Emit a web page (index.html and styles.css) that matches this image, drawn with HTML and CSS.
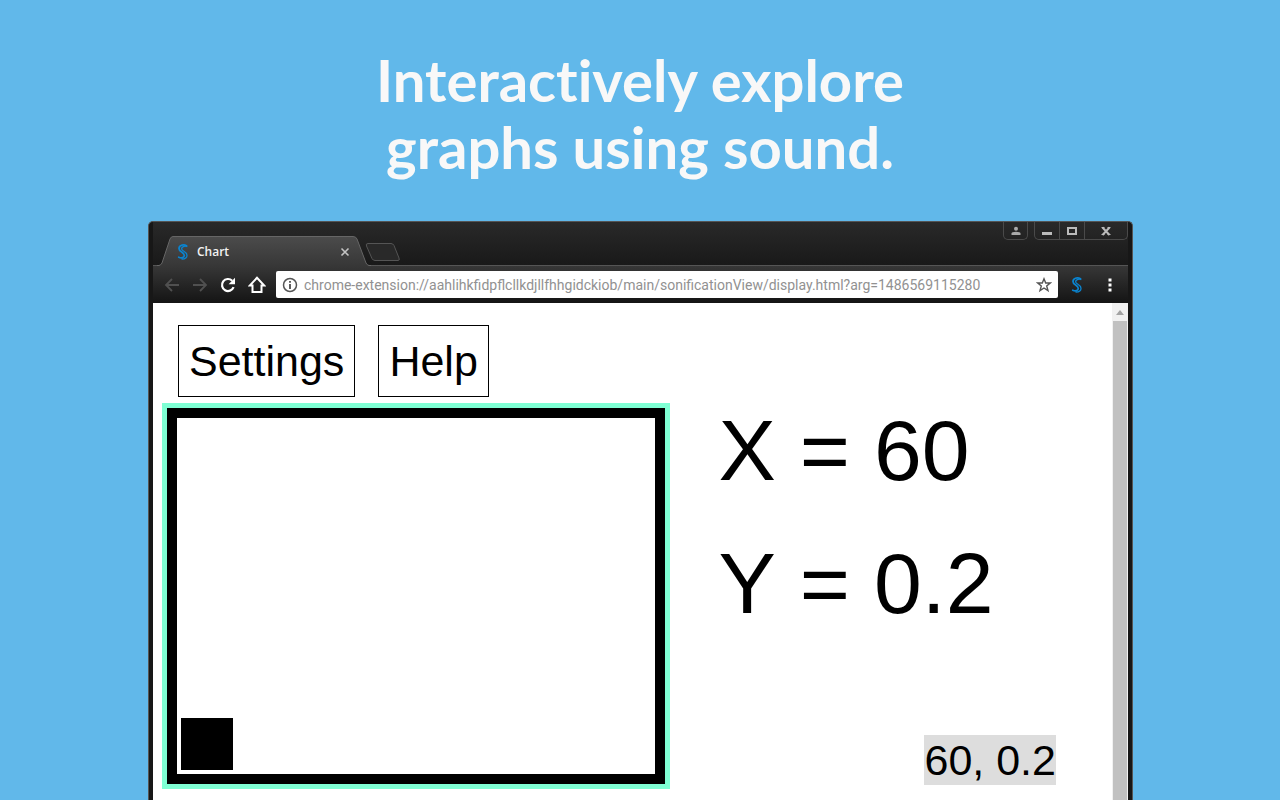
FILE: index.html
```html
<!DOCTYPE html>
<html lang="en">
<head>
<meta charset="utf-8">
<meta name="viewport" content="width=device-width, initial-scale=1">
<title>Chart</title>
<link rel="stylesheet" href="styles.css">
</head>
<body>
<svg width="0" height="0" class="defs" aria-hidden="true">
  <symbol id="logo" viewBox="0 0 12 16">
    <path d="M9.500 1.800C6 -.2 2 1.500 2 4.500C2 8.200 7.300 8 7.300 11.600C7.300 13.600 4.500 14.400 1.800 13.200" fill="none" stroke="#0a84d0" stroke-width="1.800" stroke-linecap="round"/>
    <path d="M9.800 2.500C7.500 1.800 4.600 2.500 4.600 4.800C4.600 7.400 10 7.300 10 11.200C10 13.700 7.800 15 5 15" fill="none" stroke="#0a84d0" stroke-width="1.300" stroke-linecap="round"/>
  </symbol>
</svg>
<h1 class="headline">Interactively explore<br>graphs using sound.</h1>
<div class="stage">
  <div class="window">
    <div class="titlebar">
      <div class="tab">
        <svg class="tab-edge" width="18" height="30" viewBox="0 0 18 30"><path d="M0 30V29.500H2Q4 29 5 27L13 3Q14 .5 16 .5H18V30Z" fill="url(#g)"/><path d="M0 29.500H2Q4 29 5 27L13 3Q14 .5 16 .5H18" fill="none" stroke="#666"/><defs><linearGradient id="g" x1="0" y1="0" x2="0" y2="1"><stop stop-color="#4b4b4b"/><stop offset="1" stop-color="#373737"/></linearGradient></defs></svg>
        <div class="tab-body">
          <svg class="logo" width="12" height="16"><use href="#logo"/></svg>
          <span class="tab-title">Chart</span>
          <button class="plain" aria-label="Close tab"><svg width="10" height="10" viewBox="0 0 10 10"><path d="M1.500 1.500L8.500 8.500M8.500 1.500L1.500 8.500" stroke="#c4c4c4" stroke-width="1.600"/></svg></button>
        </div>
        <svg class="tab-edge" width="18" height="30" viewBox="0 0 18 30"><path d="M18 30V29.500H16Q14 29 13 27L4 3Q3 .5 0 .5V30Z" fill="url(#g)"/><path d="M18 29.500H16Q14 29 13 27L4 3Q3 .5 0 .5" fill="none" stroke="#666"/></svg>
      </div>
      <button class="plain new-tab" aria-label="New tab"><svg width="36" height="19" viewBox="0 0 36 19"><path d="M3 .5H26Q28 .5 29 2.500L34 15Q35 17.500 33 17.500H10Q8 17.500 7 15.500L1.500 3Q.5 .5 3 .5Z" fill="#292929" stroke="#555"/></svg></button>
      <div class="controls">
        <button class="control user" aria-label="Profile"><svg width="10" height="10" viewBox="0 0 10 10"><circle cx="5" cy="2.800" r="2" fill="#aaa"/><path d="M.5 9V7.500Q.5 5.800 5 5.800Q9.500 5.800 9.500 7.500V9Z" fill="#aaa"/></svg></button>
        <div class="control-group">
          <button class="control" aria-label="Minimize"><svg width="12" height="10"><path d="M1 7.500H11" stroke="#bbb" stroke-width="3"/></svg></button>
          <button class="control" aria-label="Maximize"><svg width="12" height="10"><rect x="2" y="2" width="8" height="6" fill="none" stroke="#bbb" stroke-width="2"/></svg></button>
          <button class="control close" aria-label="Close"><svg width="12" height="10"><path d="M2.500 1.500L9.500 9M9.500 1.500L2.500 9" stroke="#bbb" stroke-width="2"/><path d="M1.500 1.500H4.500M7.500 1.500H10.500M1.500 8.500H4.500M7.500 8.500H10.500" stroke="#bbb"/></svg></button>
        </div>
      </div>
    </div>
    <div class="toolbar">
      <div class="nav">
        <button class="plain" aria-label="Back"><svg width="16" height="16" viewBox="0 0 16 16"><path d="M15 8H2M8 2L2 8L8 14" fill="none" stroke="#505050" stroke-width="1.800"/></svg></button>
        <button class="plain" aria-label="Forward"><svg width="16" height="16" viewBox="0 0 16 16"><path d="M1 8H14M8 2L14 8L8 14" fill="none" stroke="#505050" stroke-width="1.800"/></svg></button>
        <button class="plain" aria-label="Reload"><svg width="16" height="16" viewBox="0 0 16 16"><path d="M13.600 10.200A6 6 0 1 1 12.200 3.700" fill="none" stroke="#fff" stroke-width="2.200"/><path d="M15 .8V7.200H8.600Z" fill="#fff"/></svg></button>
        <button class="plain" aria-label="Home"><svg width="18" height="18" viewBox="0 0 18 18"><path d="M9 1.800L1.800 9.500H4.500V16H13.500V9.500H16.200Z" fill="none" stroke="#fff" stroke-width="2"/></svg></button>
      </div>
      <div class="address">
        <svg width="16" height="16" viewBox="0 0 16 16"><circle cx="8" cy="8" r="6.500" fill="none" stroke="#555" stroke-width="1.500"/><path d="M8 4V5.700M8 7V12" stroke="#555" stroke-width="1.900"/></svg>
        <input type="text" class="url" aria-label="Address" value="chrome-extension://aahlihkfidpflcllkdjllfhhgidckiob/main/sonificationView/display.html?arg=1486569115280">
        <button class="plain" aria-label="Bookmark"><svg width="16" height="16" viewBox="0 0 16 16"><path d="M8 1.800L9.700 6H14.200L10.700 8.900L12 13.600L8 11L4 13.600L5.300 8.900L1.800 6H6.300Z" fill="none" stroke="#555" stroke-width="1.400"/></svg></button>
      </div>
      <button class="plain" aria-label="Chart extension"><svg width="12" height="16"><use href="#logo"/></svg></button>
      <button class="plain menu" aria-label="Menu"><svg width="4" height="14"><path d="M.5 .5h3v3h-3zM.5 5.500h3v3h-3zM.5 10.500h3v3h-3z" fill="#fff"/></svg></button>
    </div>
    <div class="viewport">
      <main class="page">
        <div class="actions">
          <button class="action">Settings</button>
          <button class="action">Help</button>
        </div>
        <div class="chart">
          <div class="plot" tabindex="0" role="img" aria-label="Graph"><div class="cursor"></div></div>
          <div class="readout">
            <p class="value">X = 60</p>
            <p class="value">Y = 0.2</p>
            <output class="point">60, 0.2</output>
          </div>
        </div>
      </main>
      <div class="scrollbar"><svg width="8" height="5"><path d="M0 5L4 0L8 5Z" fill="#a3a3a3"/></svg><div class="thumb"></div></div>
    </div>
  </div>
</div>
</body>
</html>
```
FILE: styles.css
```css
* { box-sizing: border-box; }
body {
  margin: 0;
  height: 100vh;
  display: flex;
  flex-direction: column;
  overflow: hidden;
  background: #61b8ea;
  font-family: "Liberation Sans", Arial, sans-serif;
}
svg { display: block; flex: none; }
.defs { position: absolute; }
.headline {
  margin: 0;
  padding: 46px 0 41px;
  color: #f8f8f8;
  font: 700 58px/67px Lato, sans-serif;
  font-variant-ligatures: none;
  text-align: center;
}
.stage {
  flex: 1;
  min-height: 0;
  display: flex;
  padding: 0 147px 0 148px;
}
.window {
  flex: 1;
  min-width: 0;
  display: flex;
  flex-direction: column;
  padding: 0 4px;
  border: 1px solid #555;
  border-bottom: 0;
  border-radius: 5px 5px 0 0;
  background: #171717;
}
.plain {
  display: block;
  flex: none;
  padding: 0;
  border: 0;
  background: none;
}
.titlebar {
  display: flex;
  height: 44px;
  align-items: flex-end;
  padding-left: 4px;
  background: linear-gradient(#292929, #191919);
  border-bottom: 1px solid #555;
}
.tab { display: flex; margin-bottom: -1px; }
.tab-body {
  display: flex;
  align-items: center;
  width: 178px;
  height: 30px;
  padding: 0 3px 0 2px;
  border-top: 1px solid #666;
  background: linear-gradient(#4b4b4b, #373737);
}
.tab-title {
  flex: 1;
  margin-left: 8px;
  color: #f2f2f2;
  font: 600 12px/16px "Open Sans", sans-serif;
}
.new-tab { margin-bottom: 3px; margin-left: -6px; }
.controls {
  display: flex;
  gap: 6px;
  align-self: flex-start;
  margin-left: auto;
}
.control-group {
  display: flex;
  border: 1px solid #4a4a4a;
  border-top: 0;
  border-radius: 0 0 5px 5px;
}
.control {
  display: flex;
  align-items: center;
  justify-content: center;
  width: 25px;
  height: 17px;
  padding: 0;
  border: 0;
  border-right: 1px solid #4a4a4a;
  background: none;
}
.user {
  height: 18px;
  border: 1px solid #4a4a4a;
  border-top: 0;
  border-radius: 0 0 5px 5px;
}
.close { width: 42px; border-right: 0; }
.toolbar {
  display: flex;
  align-items: center;
  gap: 13px;
  height: 37px;
  padding: 0 16px 0 11px;
  background: linear-gradient(#373737, #141414);
}
.nav {
  display: flex;
  align-items: center;
  gap: 12px;
  margin-right: -3px;
}
.address {
  flex: 1;
  min-width: 0;
  display: flex;
  align-items: center;
  height: 27px;
  padding: 0 6px;
  border-radius: 2px;
  background: #fff;
}
.url {
  flex: 1;
  min-width: 0;
  margin: 0;
  padding: 0 6px;
  border: 0;
  background: none;
  color: #919191;
  font: 14px/20px Roboto, sans-serif;
}
.menu { padding: 0 0 0 12px; }
.viewport { flex: 1; min-height: 0; display: flex; background: #fff; }
.page { flex: 1; min-width: 0; padding: 22px 56px 0 9px; }
.actions { display: flex; gap: 23px; padding-left: 16px; }
.action {
  padding: 10px;
  border: 1px solid #000;
  background: #fff;
  color: #000;
  font: 43px/50px "Liberation Sans", Arial, sans-serif;
}
.chart {
  display: grid;
  grid-template-columns: 3fr 2fr;
  gap: 48px;
  margin-top: 6px;
}
.plot {
  display: flex;
  align-items: flex-end;
  aspect-ratio: 498 / 376;
  padding: 4px;
  margin: 5px;
  border: 10px solid #000;
  outline: 5px solid #7fffd4;
}
.cursor { width: 52px; height: 52px; background: #000; }
.readout { display: flex; flex-direction: column; padding-left: 1px; }
.value { margin: 0; font-size: 86px; line-height: 94px; font-kerning: none; }
.value + .value { margin-top: 39px; }
.point {
  align-self: flex-end;
  margin-top: auto;
  margin-bottom: 4px;
  background: #ddd;
  font-size: 43px;
  line-height: 50px;
}
.scrollbar {
  display: flex;
  flex-direction: column;
  align-items: center;
  gap: 6px;
  width: 16px;
  padding: 7px 1px 0;
  background: #f1f1f1;
}
.thumb { flex: 1; width: 100%; background: #c1c1c1; }
```
